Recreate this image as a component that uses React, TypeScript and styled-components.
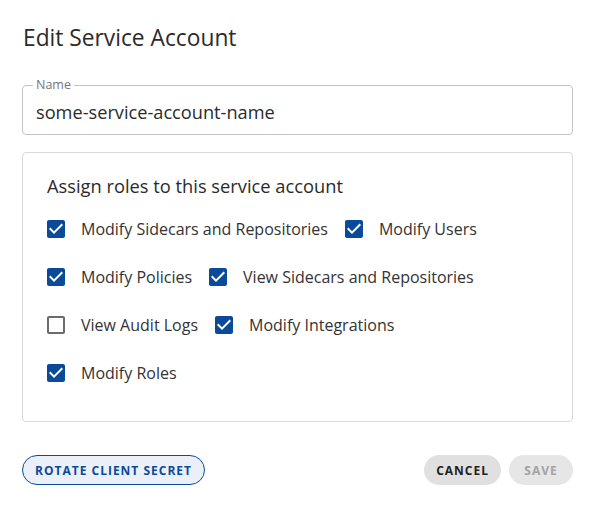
import React from "react";
import styled, { createGlobalStyle } from "styled-components";

const Global = createGlobalStyle`
  html, body { margin: 0; padding: 0; background: #fff; }
  body { font-family: "Open Sans", "Noto Sans", sans-serif; color: #333; }
  * { box-sizing: border-box; }
`;

const Dialog = styled.div`
  width: 593px;
  padding: 22px 20px 20px 22px;
  display: flex;
  flex-direction: column;
`;

const Title = styled.h2`
  margin: 0 0 0 1px;
  font-size: 22.75px;
  line-height: 32px;
  font-weight: 400;
  color: #2b2b2b;
`;

const Field = styled.fieldset`
  margin: 25px 0 0 0;
  padding: 0 14px 6px 13px;
  border: 1px solid #c4c4c4;
  border-radius: 4px;
  height: 56px;
`;

const Legend = styled.legend`
  padding: 0 3px;
  margin-left: -3px;
  font-size: 12.5px;
  line-height: 12px;
  color: #757575;
`;

const Value = styled.div`
  font-size: 18.2px;
  line-height: 26px;
  margin-top: 8px;
  color: #2b2b2b;
`;

const RolesBox = styled.div`
  margin-top: 17px;
  border: 1px solid #d9d9d9;
  border-radius: 4px;
  padding: 21px 24px 24px 24px;
  display: flex;
  flex-direction: column;
`;

const RolesHeading = styled.div`
  font-size: 18.3px;
  line-height: 24px;
  color: #2b2b2b;
  margin-bottom: 7px;
`;

const Roles = styled.div`
  display: flex;
  flex-wrap: wrap;
`;

const Role = styled.label`
  display: flex;
  align-items: center;
  height: 48px;
  margin-right: 17px;
  font-size: 16px;
  color: #333;
  gap: 13px;
`;

const Box = styled.svg`
  width: 24px;
  height: 24px;
  margin-left: -3px;
  flex: none;
`;

const Actions = styled.div`
  margin-top: 33px;
  display: flex;
  align-items: center;
  justify-content: space-between;
`;

const Group = styled.div`
  display: flex;
  gap: 8px;
`;

const Btn = styled.button<{ $variant: "outline" | "grey" | "disabled" }>`
  font-family: "Open Sans", "Noto Sans", sans-serif;
  font-weight: 700;
  font-size: 12px;
  letter-spacing: 1px;
  text-transform: uppercase;
  height: 30px;
  min-width: 64px;
  border-radius: 15px;
  cursor: pointer;
  padding: 0 ${(p) => (p.$variant === "outline" ? "12px" : "11px")};
  border: 1px solid
    ${(p) => (p.$variant === "outline" ? "#0b4a9b" : "transparent")};
  background: ${(p) =>
    p.$variant === "outline" ? "#ebf0f8" : p.$variant === "grey" ? "#e0e0e0" : "#e6e6e6"};
  color: ${(p) =>
    p.$variant === "outline" ? "#0b4a9b" : p.$variant === "grey" ? "#222" : "#a3a3a3"};
`;

const roles: [string, boolean][] = [
  ["Modify Sidecars and Repositories", true],
  ["Modify Users", true],
  ["Modify Policies", true],
  ["View Sidecars and Repositories", true],
  ["View Audit Logs", false],
  ["Modify Integrations", true],
  ["Modify Roles", true],
];

const CheckIcon = ({ checked }: { checked: boolean }) =>
  checked ? (
    <Box viewBox="0 0 24 24">
      <path
        fill="#0b4a9b"
        d="M19 3H5c-1.11 0-2 .9-2 2v14c0 1.1.89 2 2 2h14c1.11 0 2-.9 2-2V5c0-1.1-.89-2-2-2zm-9 14l-5-5 1.41-1.41L10 14.17l7.59-7.59L19 8l-9 9z"
      />
    </Box>
  ) : (
    <Box viewBox="0 0 24 24">
      <path
        fill="#6b6b6b"
        d="M19 5v14H5V5h14m0-2H5c-1.1 0-2 .9-2 2v14c0 1.1.9 2 2 2h14c1.1 0 2-.9 2-2V5c0-1.1-.9-2-2-2z"
      />
    </Box>
  );

export default function App() {
  return (
    <>
      <Global />
      <Dialog>
        <Title>Edit Service Account</Title>
        <Field>
          <Legend>Name</Legend>
          <Value>some-service-account-name</Value>
        </Field>
        <RolesBox>
          <RolesHeading>Assign roles to this service account</RolesHeading>
          <Roles>
            {roles.map(([name, checked]) => (
              <Role key={name}>
                <CheckIcon checked={checked} />
                {name}
              </Role>
            ))}
          </Roles>
        </RolesBox>
        <Actions>
          <Btn $variant="outline">Rotate Client Secret</Btn>
          <Group>
            <Btn $variant="grey">Cancel</Btn>
            <Btn $variant="disabled">Save</Btn>
          </Group>
        </Actions>
      </Dialog>
    </>
  );
}
